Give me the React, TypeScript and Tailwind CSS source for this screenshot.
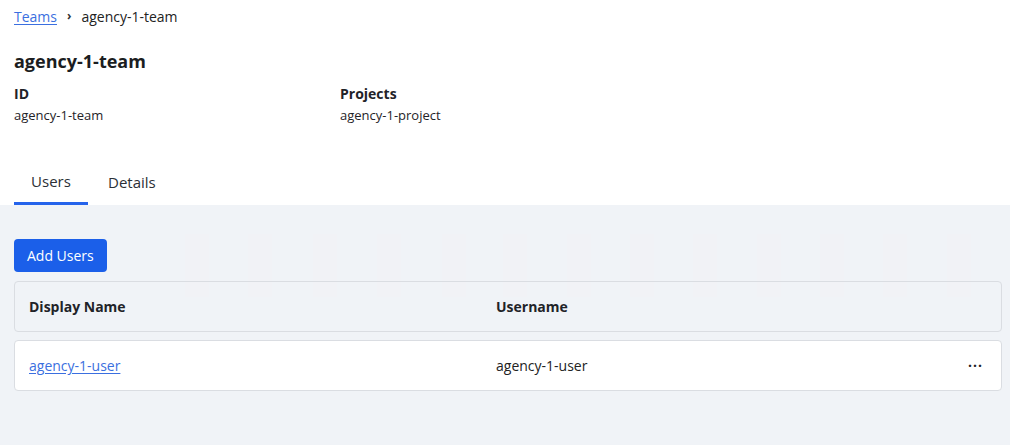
import React from 'react';

const bars = [185, 248, 313, 377, 442, 503, 567, 630, 693, 757, 820, 883, 947];

const App: React.FC = () => {
  return (
    <div className="w-[1010px] h-[445px] flex flex-col bg-white text-[#1f2328] overflow-hidden" style={{ fontFamily: '"Open Sans", Lato, sans-serif' }}>
      <div className="px-[14px]">
        {/* Breadcrumb */}
        <div className="flex items-center h-[32px] text-[14px]">
          <a href="#" className="text-[#3b6fe0] underline underline-offset-2">Teams</a>
          <span className="mx-[10px] text-[12px] text-[#333] font-bold">&#8250;</span>
          <span className="text-[#222]">agency-1-team</span>
        </div>

        <h1 className="mt-[16px] text-[18px] font-bold leading-[26px] text-[#1b1d21]">agency-1-team</h1>

        <div className="mt-[10px] grid grid-cols-[326px_1fr] text-[14px]">
          <div>
            <div className="font-bold leading-[20px]">ID</div>
            <div className="text-[13px] leading-[22px]">agency-1-team</div>
          </div>
          <div>
            <div className="font-bold leading-[20px]">Projects</div>
            <div className="text-[13px] leading-[22px]">agency-1-project</div>
          </div>
        </div>

        {/* Tabs */}
        <div className="mt-[31px] flex text-[15px] text-[#2b2f36]">
          <div className="w-[74px] h-[48px] flex items-center justify-center border-b-[3px] border-[#2563eb] pt-[3px]">Users</div>
          <div className="ml-[20px] h-[48px] flex items-center pt-[3px]">Details</div>
        </div>
      </div>

      <div className="relative flex-1 bg-[#f0f3f7] pl-[14px] pr-[8px] pt-[34px]">
        {/* faint skeleton bars */}
        <div className="absolute inset-0 pointer-events-none">
          {bars.map(x => (
            <div key={x} className="absolute top-[29px] h-[63px] w-[24px] bg-[#f1f2f6]" style={{ left: x }} />
          ))}
        </div>

        <div className="relative">
          <button className="h-[33px] px-[13px] rounded-[4px] bg-[#1b5fe9] text-white text-[14px]">Add Users</button>

          <div className="mt-[9px] h-[51px] rounded-[4px] border border-[#dadde2] grid grid-cols-[467px_1fr_auto] items-center px-[14px] text-[14px] font-bold text-[#1f2328]">
            <span>Display Name</span>
            <span>Username</span>
            <span />
          </div>

          <div className="mt-[8px] h-[51px] rounded-[4px] border border-[#dadde2] bg-white grid grid-cols-[467px_1fr_auto] items-center px-[14px] text-[14px]">
            <a href="#" className="text-[#3b6fe0] underline underline-offset-2">agency-1-user</a>
            <span className="text-[#222]">agency-1-user</span>
            <span className="pr-[4px] text-[14px] font-bold tracking-[1px] text-[#222]">&middot;&middot;&middot;</span>
          </div>
        </div>
      </div>
    </div>
  );
};

export default App;
